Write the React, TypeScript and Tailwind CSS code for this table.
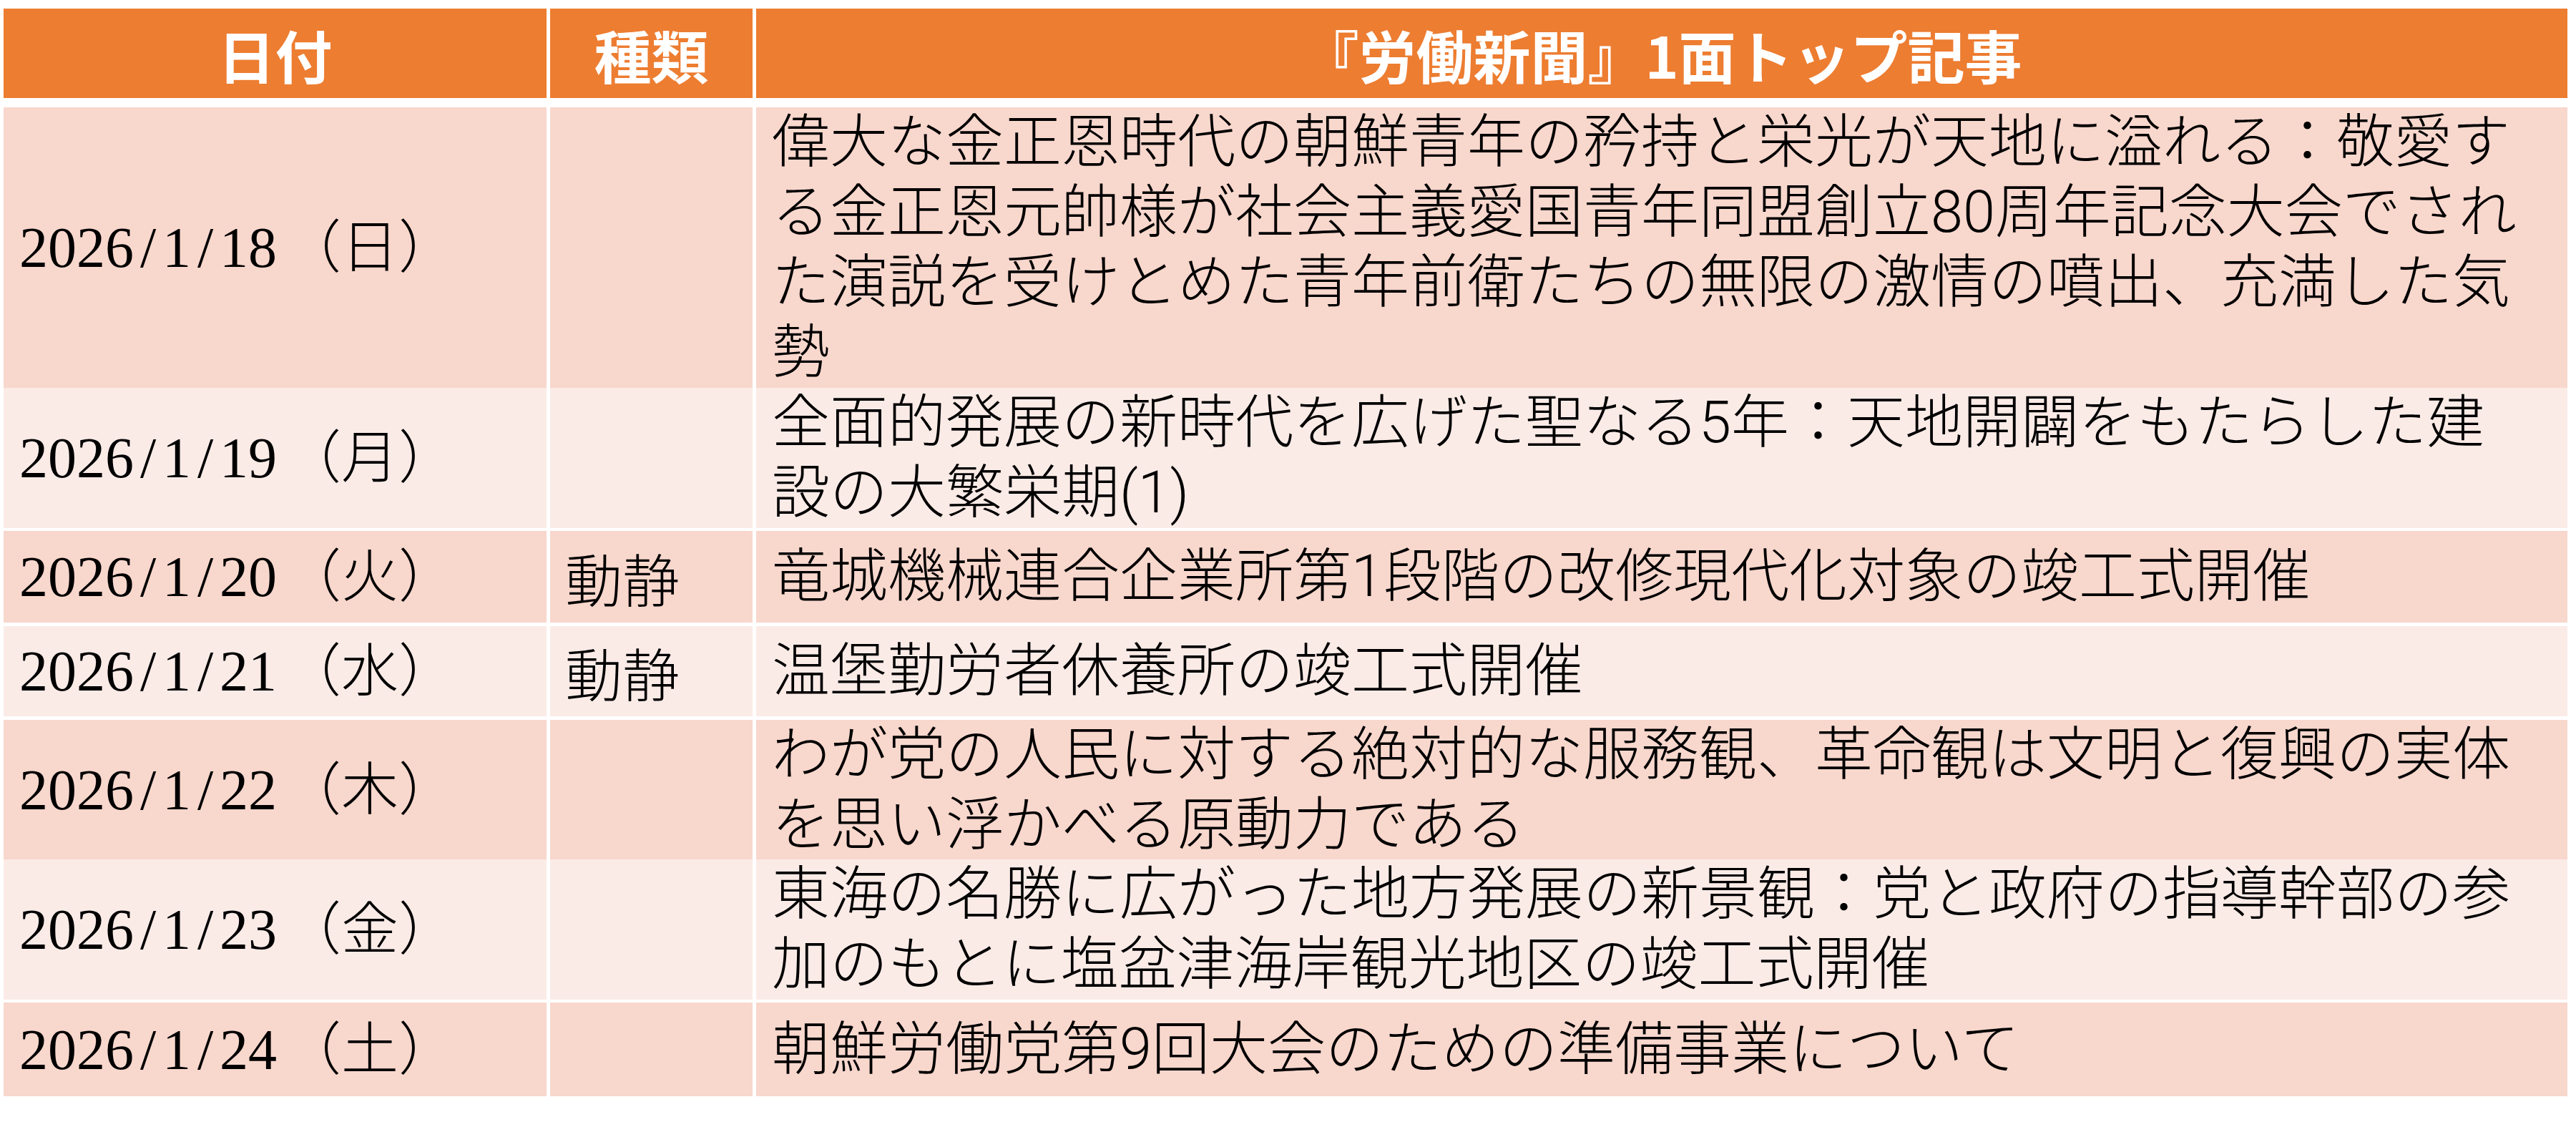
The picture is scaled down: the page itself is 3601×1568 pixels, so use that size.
type Row = {
  date: string;
  dow: string;
  kind?: string;
  lines: string[];
  height: string;
  band: "dark" | "light";
};

const rows: Row[] = [
  {
    date: "2026/1/18",
    dow: "日",
    lines: [
      "偉大な金正恩時代の朝鮮青年の矜持と栄光が天地に溢れる：敬愛す",
      "る金正恩元帥様が社会主義愛国青年同盟創立80周年記念大会でされ",
      "た演説を受けとめた青年前衛たちの無限の激情の噴出、充満した気",
      "勢"
    ],
    height: "h-[387px]",
    band: "dark"
  },
  {
    date: "2026/1/19",
    dow: "月",
    lines: ["全面的発展の新時代を広げた聖なる5年：天地開闢をもたらした建", "設の大繁栄期(1)"],
    height: "h-[195px]",
    band: "light"
  },
  {
    date: "2026/1/20",
    dow: "火",
    kind: "動静",
    lines: ["竜城機械連合企業所第1段階の改修現代化対象の竣工式開催"],
    height: "h-[128px]",
    band: "dark"
  },
  {
    date: "2026/1/21",
    dow: "水",
    kind: "動静",
    lines: ["温堡勤労者休養所の竣工式開催"],
    height: "h-[126px]",
    band: "light"
  },
  {
    date: "2026/1/22",
    dow: "木",
    lines: ["わが党の人民に対する絶対的な服務観、革命観は文明と復興の実体", "を思い浮かべる原動力である"],
    height: "h-[190px]",
    band: "dark"
  },
  {
    date: "2026/1/23",
    dow: "金",
    lines: ["東海の名勝に広がった地方発展の新景観：党と政府の指導幹部の参", "加のもとに塩盆津海岸観光地区の竣工式開催"],
    height: "h-[195px]",
    band: "light"
  },
  {
    date: "2026/1/24",
    dow: "土",
    lines: ["朝鮮労働党第9回大会のための準備事業について"],
    height: "h-[131px]",
    band: "dark"
  }
];

function DateText({ date, dow }: { date: string; dow: string }) {
  // Mincho-like half-width slash: give it a full half-em cell
  const parts = date.split("/");
  return (
    <span className="whitespace-nowrap">
      {parts.map((p, i) => (
        <span key={i}>
          {i > 0 ? <span className="inline-block w-[40px] text-center">/</span> : null}
          {p}
        </span>
      ))}
      <span className="ml-[10px] font-light">（{dow}）</span>
    </span>
  );
}

export default function App() {
  return (
    <div className="h-[1568px] w-[3601px] bg-white pl-[5px] pt-[12px] text-black [font-family:'Noto_Sans_CJK_JP',sans-serif]">
      <div className="mb-[13px] grid h-[125px] grid-cols-[759px_283px_2532px] gap-x-[5px] text-[80px] font-bold leading-none text-white">
        <div className="flex items-center justify-center bg-[#ED7D31]">日付</div>
        <div className="flex items-center justify-center bg-[#ED7D31]">種類</div>
        <div className="flex items-center justify-center bg-[#ED7D31]">『労働新聞』1面トップ記事</div>
      </div>

      <div className="flex flex-col gap-y-[5px]">
        {rows.map((row) => {
          const bg = row.band === "dark" ? "bg-[#F8D7CD]" : "bg-[#FBEBE7]";
          return (
            <div key={row.date} className={`grid grid-cols-[759px_283px_2532px] gap-x-[5px] ${row.height}`}>
              <div className={`flex items-center pl-[22px] text-[80px] leading-none [font-family:'Liberation_Serif','Noto_Sans_CJK_JP',serif] ${bg}`}>
                <DateText date={row.date} dow={row.dow} />
              </div>
              <div className={`flex items-center pl-[21px] text-[80px] leading-none font-light ${bg}`}>
                {row.kind ?? ""}
              </div>
              <div className={`flex items-center pl-[22px] text-[81px] leading-[98px] font-light [font-family:Roboto,'Noto_Sans_CJK_JP',sans-serif] ${bg}`}>
                <div>
                  {row.lines.map((line, i) => (
                    <div key={i} className="whitespace-nowrap">
                      {line}
                    </div>
                  ))}
                </div>
              </div>
            </div>
          );
        })}
      </div>
    </div>
  );
}
